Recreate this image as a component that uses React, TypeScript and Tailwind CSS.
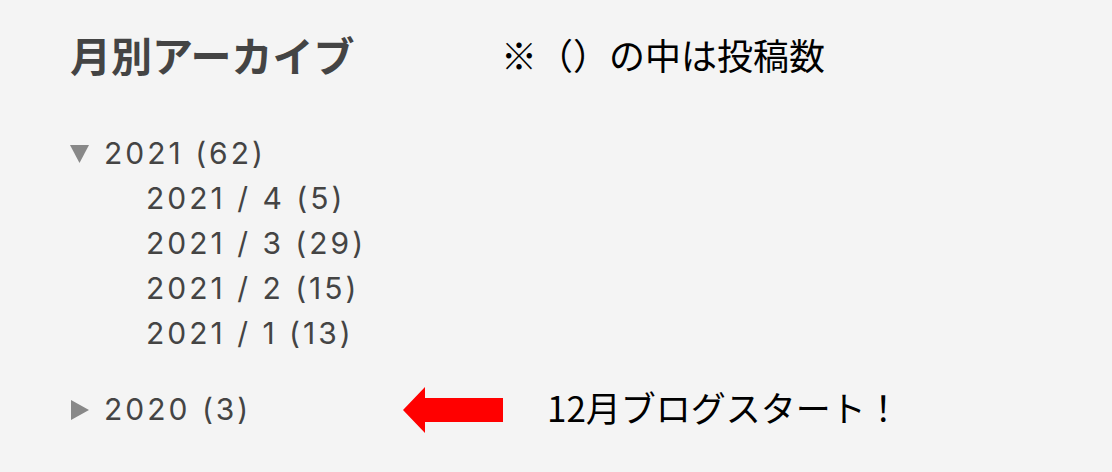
import React from "react";

const jp = { fontFamily: '"Noto Sans CJK JP", "Noto Sans", sans-serif' };
const num = { fontFamily: 'Inter, "Noto Sans CJK JP", sans-serif' };

function Caret({ open }: { open: boolean }) {
  return (
    <svg width="20" height="20" viewBox="0 0 20 20" className="shrink-0">
      {open ? (
        <polygon points="0,1 19,1 9.5,19" fill="#888888" />
      ) : (
        <polygon points="1,0 19,10 1,20" fill="#888888" />
      )}
    </svg>
  );
}

function LeftArrow() {
  return (
    <svg width="100" height="46" viewBox="0 0 100 46">
      <polygon points="0,23 22,0 22,11 100,11 100,35 22,35 22,46" fill="#ff0000" />
    </svg>
  );
}

const months = ["2021 / 4 (5)", "2021 / 3 (29)", "2021 / 2 (15)", "2021 / 1 (13)"];

export default function App() {
  return (
    <div className="w-[1112px] h-[472px] bg-[#f4f4f4] pl-[70px] pt-[26px] overflow-hidden">
      <div className="flex items-center h-[56px]">
        <h2 style={jp} className="text-[41px] font-bold text-[#444444] leading-[56px] w-[431px]">
          月別アーカイブ
        </h2>
        <p style={jp} className="text-[36px] text-black leading-[56px]">
          ※（）の中は投稿数
        </p>
      </div>

      <div className="mt-[49px] text-[#444444]" style={num}>
        <div className="flex items-center h-[45px] gap-[14px]">
          <Caret open />
          <span className="text-[30px] tracking-[3px]">2021 (62)</span>
        </div>
        {months.map((m) => (
          <div key={m} className="h-[45px] flex items-center pl-[76px]">
            <span className="text-[30px] tracking-[3px]">{m}</span>
          </div>
        ))}

        <div className="flex items-center h-[45px] mt-[31px]">
          <div className="flex items-center gap-[14px] w-[333px]">
            <Caret open={false} />
            <span className="text-[30px] tracking-[3px]">2020 (3)</span>
          </div>
          <LeftArrow />
          <span style={jp} className="ml-[44px] text-[35px] text-black -mt-[4px]">
            12月ブログスタート！
          </span>
        </div>
      </div>
    </div>
  );
}
